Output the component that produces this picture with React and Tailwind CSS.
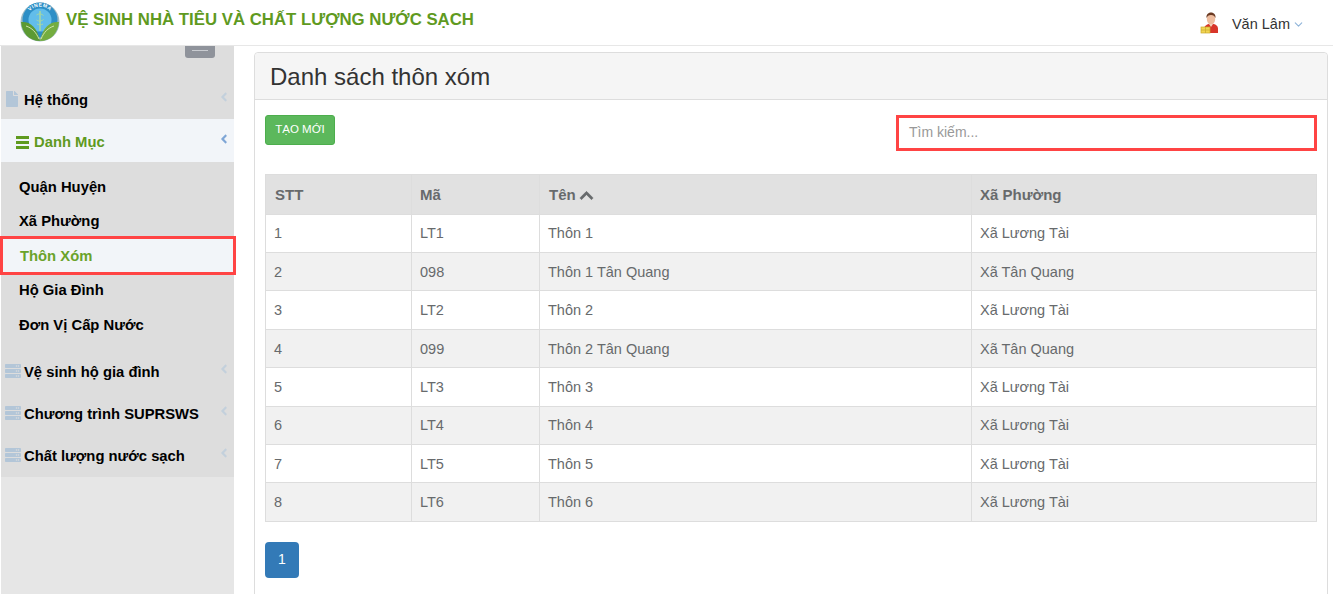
import { FaFile, FaServer, FaChevronUp, FaAngleLeft } from "react-icons/fa";
import { ChevronDown } from "lucide-react";

const rows = [
  ["1", "LT1", "Thôn 1", "Xã Lương Tài"],
  ["2", "098", "Thôn 1 Tân Quang", "Xã Tân Quang"],
  ["3", "LT2", "Thôn 2", "Xã Lương Tài"],
  ["4", "099", "Thôn 2 Tân Quang", "Xã Tân Quang"],
  ["5", "LT3", "Thôn 3", "Xã Lương Tài"],
  ["6", "LT4", "Thôn 4", "Xã Lương Tài"],
  ["7", "LT5", "Thôn 5", "Xã Lương Tài"],
  ["8", "LT6", "Thôn 6", "Xã Lương Tài"],
];

function Logo() {
  return (
    <svg width="40" height="40" viewBox="0 0 40 40">
      <circle cx="20" cy="20" r="19.5" fill="#9fbcc6" />
      <circle cx="20" cy="18" r="17.500" fill="#2d8fc6" />
      <circle cx="20" cy="18" r="11.500" fill="#62bdea" />
      <defs>
        <path id="logoArc" d="M6.500 18a13.500 13.500 0 0 1 27 0" />
      </defs>
      <text fontSize="5" fontWeight="700" fill="#ffffff" fontFamily="Liberation Sans, sans-serif" letterSpacing="0.6">
        <textPath href="#logoArc" startOffset="50%" textAnchor="middle">VINEMA</textPath>
      </text>
      <path d="M20 9v20" stroke="#a8d8a0" strokeWidth="1.500" />
      <path d="M16.500 13c3-2 5-1 7 .5M16.500 18c3 2 5 1 7-.5M17 22c2 1 4 1 6 0" stroke="#a8d8a0" strokeWidth="1" fill="none" />
      <path d="M1 20c8-1 16 4 19 19C9 39 2 31 1 20z" fill="#5c9a33" />
      <path d="M39 20c-8-1-16 4-19 19 11 0 18-8 19-19z" fill="#74ad3f" />
      <path d="M6 24c6 2 10 6 13 13M34 24c-6 2-10 6-13 13" stroke="#cfe3ae" strokeWidth="1" fill="none" />
    </svg>
  );
}

function Avatar() {
  return (
    <svg width="20" height="22" viewBox="0 0 20 22">
      <path d="M4 21v-4c0-3 3-5 6-5h2c4 0 6 2 6 5v4z" fill="#d8352a" />
      <ellipse cx="11" cy="7" rx="4.200" ry="5.500" fill="#eebd9f" />
      <path d="M6.500 6C6 2 9 .5 11 .5s5 1.500 4.500 5.500c-1-2-2-3-4.500-3S7.500 4 6.500 6z" fill="#6b3a22" />
      <path d="M9 12l2 3 2-3z" fill="#f3d3bd" />
      <rect x="1" y="15" width="9" height="6" fill="#f2d552" stroke="#c9a92c" strokeWidth="0.7" />
      <path d="M1 18h9M5.500 15v6" stroke="#c9a92c" strokeWidth="0.7" />
    </svg>
  );
}

function MenuItem({ label }) {
  return (
    <div className="h-[42px] pt-[2px] flex items-center relative text-black font-bold text-[14.800px]">
      <span className="w-[23px] pl-[4px] -mt-[3px] flex text-[#b3c6d8]"><FaServer size={16} /></span>
      <span>{label}</span>
      <FaAngleLeft className="absolute right-[3px] top-[11px] text-[#c3d0dc]" size={14} />
    </div>
  );
}

function SubItem({ label }) {
  return <div className="h-[34.500px] pl-[18px] flex items-center text-black font-bold text-[14.800px]">{label}</div>;
}

export default function App() {
  return (
    <div className="h-[594px] overflow-hidden bg-white text-[14.500px] text-[#676a6c] font-['Liberation_Sans',Arial,sans-serif]">
      {/* Header */}
      <header className="h-[46px] border-b border-[#e7e7e7] flex items-center justify-between pl-[20px] pr-[28px]">
        <div className="flex items-center gap-[6px] pb-[2px]">
          <Logo />
          <span className="text-[16.800px] font-bold text-[#5f9a1f] pb-[4px]">VỆ SINH NHÀ TIÊU VÀ CHẤT LƯỢNG NƯỚC SẠCH</span>
        </div>
        <div className="flex items-center text-[#333] text-[14.500px]">
          <Avatar />
          <span className="ml-[12px] pt-[5px]">Văn Lâm</span>
          <ChevronDown className="ml-[2px] mt-[3px] text-[#8fb4d9]" size={13} strokeWidth={2} />
        </div>
      </header>

      <div className="flex h-[548px]">
        {/* Sidebar */}
        <aside className="w-[233px] ml-[1px] shrink-0 bg-[#e6e6e6] flex flex-col">
          <div className="bg-[#dddddd]">
            <div className="h-[31px] relative">
              <div className="absolute left-[184px] top-0 w-[30px] h-[12px] bg-[#8f939b] rounded-b-[3px] flex justify-center">
                <div className="w-[16px] h-px bg-[#c9ccd1] mt-[4px]" />
              </div>
            </div>
            <div className="h-[42px] pt-[5px] flex items-center relative text-black font-bold text-[14.800px]">
              <span className="w-[23px] pl-[3px] -mt-[3px] flex text-[#b3c6d8]"><FaFile size={16} /></span>
              <span>Hệ thống</span>
              <FaAngleLeft className="absolute right-[3px] top-[13px] text-[#c3d0dc]" size={14} />
            </div>
            <div className="h-[43px] pt-[3px] bg-[#f2f5f9] flex items-center relative font-bold text-[14.800px] text-[#5f9a1f]">
              <svg className="ml-[15px] mr-[5px]" width="13" height="13" viewBox="0 0 13 13" fill="currentColor">
                <rect y="0" width="13" height="3" />
                <rect y="5" width="13" height="3" />
                <rect y="10" width="13" height="3" />
              </svg>
              <span>Danh Mục</span>
              <FaAngleLeft className="absolute right-[3px] top-[13px] text-[#7fa6d6]" size={14} />
            </div>
            <div className="pt-[7.500px] pb-[8.500px]">
              <SubItem label="Quận Huyện" />
              <SubItem label="Xã Phường" />
              <div className="h-[39px] pt-[1px] -ml-px -mr-[2px] -mt-[2.500px] -mb-[2px] relative border-[3px] border-[#ff4444] bg-[#f2f5f9] pl-[17px] flex items-center font-bold text-[14.800px] text-[#6aa32a]">Thôn Xóm</div>
              <SubItem label="Hộ Gia Đình" />
              <SubItem label="Đơn Vị Cấp Nước" />
            </div>
            <MenuItem label="Vệ sinh hộ gia đình" />
            <MenuItem label="Chương trình SUPRSWS" />
            <MenuItem label="Chất lượng nước sạch" />
          </div>
        </aside>

        {/* Panel */}
        <main className="flex-1 min-w-0 pl-[20px] pr-[5px] pt-[6px]">
          <div className="h-[600px] border border-[#dddddd] rounded-t-[4px]">
            <div className="h-[47px] pt-[2px] bg-[#f5f5f5] border-b border-[#dddddd] rounded-t-[4px] pl-[15px] flex items-center text-[24px] text-[#333]">
              Danh sách thôn xóm
            </div>
            <div className="pl-[10px] pr-[10px] pt-[15px]">
              <div className="flex justify-between items-start">
                <button className="h-[30px] w-[70px] bg-[#5cb85c] border border-[#4cae4c] rounded-[3px] text-white text-[11.500px]">TẠO MỚI</button>
                <div className="w-[421px] h-[36px] pb-[2px] border-[3px] border-[#ff4444] flex items-center pl-[10px] text-[14px] text-[#999]">Tìm kiếm...</div>
              </div>
              <table className="mt-[23px] w-[1051px] table-fixed border-collapse">
                <colgroup>
                  <col className="w-[146px]" />
                  <col className="w-[128px]" />
                  <col className="w-[432px]" />
                  <col className="w-[345px]" />
                </colgroup>
                <thead>
                  <tr className="bg-[#e1e1e1] text-left h-[39.500px] text-[15px]">
                    <th className="border border-[#dddddd] pt-[2px] px-[9px] font-bold">STT</th>
                    <th className="border border-[#dddddd] pt-[2px] px-[8px] font-bold">Mã</th>
                    <th className="border border-[#dddddd] pt-[2px] px-[9px] font-bold">
                      <span className="inline-flex items-center gap-[3px]">Tên <FaChevronUp size={15} className="stroke-current stroke-[20]" /></span>
                    </th>
                    <th className="border border-[#dddddd] pt-[2px] px-[8px] font-bold">Xã Phường</th>
                  </tr>
                </thead>
                <tbody>
                  {rows.map((r, i) => (
                    <tr key={r[0]} className={`h-[38.430px] ${i % 2 ? "bg-[#f1f1f1]" : "bg-white"}`}>
                      {r.map((c) => (
                        <td key={c} className="border border-[#dddddd] pt-[2px] px-[8px]">{c}</td>
                      ))}
                    </tr>
                  ))}
                </tbody>
              </table>
              <button className="mt-[20px] w-[34px] h-[36px] bg-[#337ab7] rounded-[4px] text-white text-[14px]">1</button>
            </div>
          </div>
        </main>
      </div>
    </div>
  );
}
